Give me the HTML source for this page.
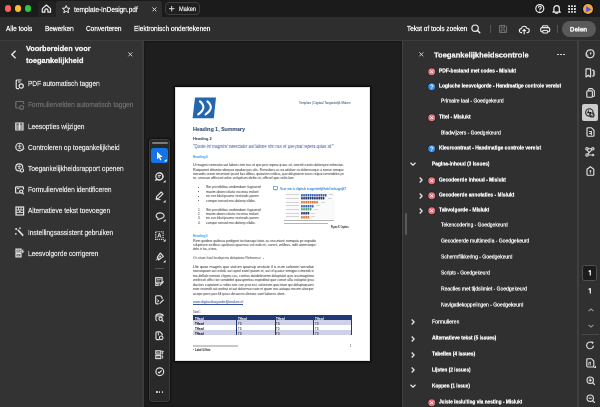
<!DOCTYPE html>
<html><head><meta charset="utf-8">
<style>
*{margin:0;padding:0;box-sizing:border-box}
html,body{width:600px;height:407px;overflow:hidden;background:#1d1d1d;font-family:"Liberation Sans",sans-serif;color:#e8e8e8}
.a{position:absolute}
.t{position:absolute;white-space:nowrap;will-change:transform}
svg{position:absolute;overflow:visible}
</style></head><body>

<div class="a" style="left:0px;top:0px;width:600px;height:17px;background:#1b1b1b;"></div>
<div class="a" style="left:4.7px;top:5.4px;width:6.8px;height:6.8px;background:#fe5f57;border-radius:50%"></div>
<div class="a" style="left:14.7px;top:5.4px;width:6.8px;height:6.8px;background:#febc2e;border-radius:50%"></div>
<div class="a" style="left:24.7px;top:5.4px;width:6.8px;height:6.8px;background:#28c840;border-radius:50%"></div>
<div class="a" style="left:38px;top:1px;width:17.5px;height:16px;background:#222222;border-radius:3px 3px 0 0"></div>
<div class="a" style="left:56px;top:1px;width:106px;height:16px;background:#2e2e2e;border-radius:3px 3px 0 0"></div>
<svg style="left:41px;top:4px;" width="11" height="9" viewBox="0 0 11 9"><path d="M1.3 4.6 L5.4 1 L9.5 4.6 V8.2 H6.9 V6.3 A1.5 1.5 0 0 0 3.9 6.3 V8.2 H1.3 Z" fill="none" stroke="#f0f0f0" stroke-width="1.2" stroke-linejoin="round"/></svg>
<svg style="left:62px;top:4.6px;" width="9" height="9" viewBox="0 0 9 9"><path d="M4.2 0.6 L5.3 3.1 L8 3.3 L5.9 5.1 L6.6 7.7 L4.2 6.3 L1.8 7.7 L2.5 5.1 L0.4 3.3 L3.1 3.1 Z" fill="none" stroke="#eee" stroke-width="1" stroke-linejoin="round"/></svg>
<div class="t" style="left:74px;top:5.67px;font-size:14.00px;line-height:14.00px;color:#e8e8e8;-webkit-text-stroke:0.60px #e8e8e8;transform:scale(0.4650,0.5000);transform-origin:0 0;">template-InDesign.pdf</div>
<svg style="left:151.5px;top:6.8px;" width="5" height="5" viewBox="0 0 5 5"><path d="M0.5 0.5 L4.3 4.3 M4.3 0.5 L0.5 4.3" stroke="#ddd" stroke-width="1"/></svg>
<div class="a" style="left:164.7px;top:2.3px;width:35px;height:12.7px;background:#1f1f1f;border:1px solid #3f3f3f;border-radius:4px"></div>
<svg style="left:168.5px;top:6.3px;" width="6" height="6" viewBox="0 0 6 6"><path d="M2.7 0 V5.4 M0 2.7 H5.4" stroke="#ddd" stroke-width="1"/></svg>
<div class="t" style="left:178.8px;top:6.22px;font-size:12.00px;line-height:12.00px;color:#dedede;-webkit-text-stroke:0.60px #dedede;transform:scale(0.4700,0.5000);transform-origin:0 0;">Maken</div>
<svg style="left:534.5px;top:3.8px;" width="10" height="10" viewBox="0 0 10 10"><circle cx="4.8" cy="4.6" r="4" fill="none" stroke="#f0f0f0" stroke-width="1.15"/><path d="M3.4 3.7 A1.4 1.4 0 1 1 4.8 5 V5.7" fill="none" stroke="#f0f0f0" stroke-width="1.1"/><circle cx="4.8" cy="7.1" r="0.6" fill="#f0f0f0"/></svg>
<svg style="left:551.5px;top:3.5px;" width="10" height="10" viewBox="0 0 10 10"><path d="M1.9 7.3 V4.4 A2.7 2.7 0 0 1 7.3 4.4 V7.3 L8.3 8.1 H0.9 Z" fill="none" stroke="#f0f0f0" stroke-width="1.2" stroke-linejoin="round"/><path d="M3.5 9.3 H5.7" stroke="#f0f0f0" stroke-width="1.1" stroke-linecap="round"/></svg>
<svg style="left:568.1px;top:4.5px;" width="9" height="9" viewBox="0 0 9 9"><rect x="0.2" y="0.2" width="1.8" height="1.8" rx=".5" fill="#f0f0f0"/><rect x="0.2" y="3.1" width="1.8" height="1.8" rx=".5" fill="#f0f0f0"/><rect x="0.2" y="6.0" width="1.8" height="1.8" rx=".5" fill="#f0f0f0"/><rect x="3.1" y="0.2" width="1.8" height="1.8" rx=".5" fill="#f0f0f0"/><rect x="3.1" y="3.1" width="1.8" height="1.8" rx=".5" fill="#f0f0f0"/><rect x="3.1" y="6.0" width="1.8" height="1.8" rx=".5" fill="#f0f0f0"/><rect x="6.0" y="0.2" width="1.8" height="1.8" rx=".5" fill="#f0f0f0"/><rect x="6.0" y="3.1" width="1.8" height="1.8" rx=".5" fill="#f0f0f0"/><rect x="6.0" y="6.0" width="1.8" height="1.8" rx=".5" fill="#f0f0f0"/></svg>
<div class="a" style="left:582.9px;top:3.9px;width:10px;height:10px;background:#f2a93c;border-radius:50%;box-shadow:0 0 0 1px #0c0c0c"></div>
<svg style="left:585.6px;top:5.6px;" width="6" height="7" viewBox="0 0 6 7"><path d="M0.4 0.2 L5.3 3.4 L0.4 6.3 Z" fill="#4a5ae8"/><path d="M0.4 0.2 L2.6 3.3 L0.4 6.3 Z" fill="#6c48e0"/></svg>
<div class="a" style="left:0px;top:17px;width:600px;height:22.8px;background:#2e2e2e;"></div>
<div class="a" style="left:0px;top:39.8px;width:600px;height:1.4px;background:#3c3c3c;"></div>
<div class="t" style="left:5.9px;top:25.27px;font-size:14.00px;line-height:14.00px;color:#f2f2f2;-webkit-text-stroke:0.60px #f2f2f2;transform:scale(0.4600,0.5000);transform-origin:0 0;">Alle tools</div>
<div class="t" style="left:45px;top:25.27px;font-size:14.00px;line-height:14.00px;color:#f2f2f2;-webkit-text-stroke:0.60px #f2f2f2;transform:scale(0.4600,0.5000);transform-origin:0 0;">Bewerken</div>
<div class="t" style="left:86px;top:25.27px;font-size:14.00px;line-height:14.00px;color:#f2f2f2;-webkit-text-stroke:0.60px #f2f2f2;transform:scale(0.4600,0.5000);transform-origin:0 0;">Converteren</div>
<div class="t" style="left:133.7px;top:25.27px;font-size:14.00px;line-height:14.00px;color:#f2f2f2;-webkit-text-stroke:0.60px #f2f2f2;transform:scale(0.4600,0.5000);transform-origin:0 0;">Elektronisch ondertekenen</div>
<div class="t" style="left:407px;top:25.27px;font-size:14.00px;line-height:14.00px;color:#f2f2f2;-webkit-text-stroke:0.60px #f2f2f2;transform:scale(0.4600,0.5000);transform-origin:0 0;">Tekst of tools zoeken</div>
<svg style="left:470px;top:23px;" width="12" height="12" viewBox="0 0 12 12"><circle cx="5.1" cy="5.2" r="3.2" fill="none" stroke="#eee" stroke-width="1.2"/><path d="M7.4 7.5 L9.8 9.8" stroke="#eee" stroke-width="1.3" stroke-linecap="round"/></svg>
<div class="a" style="left:490.1px;top:25px;width:1px;height:7.6px;background:#555;"></div>
<svg style="left:499px;top:25px;" width="9" height="8" viewBox="0 0 9 8"><path d="M0.6 0.6 H6.4 L7.6 1.8 V7.4 H0.6 Z" fill="none" stroke="#777" stroke-width="1"/><path d="M2.2 0.6 V2.8 H5.6 V0.6 M2.2 7.4 V4.8 H5.8 V7.4" fill="none" stroke="#777" stroke-width="0.9"/></svg>
<svg style="left:519px;top:24.5px;" width="11" height="10" viewBox="0 0 11 10"><path d="M3 7.6 H2.4 A2 2 0 0 1 2.3 3.6 A2.9 2.9 0 0 1 7.9 3.2 A2.2 2.2 0 0 1 8.2 7.6 H7.6" fill="none" stroke="#eee" stroke-width="1.1" stroke-linejoin="round"/><path d="M5.2 9.3 V4.6 M3.5 6.2 L5.2 4.5 L6.9 6.2" fill="none" stroke="#eee" stroke-width="1.1"/></svg>
<svg style="left:540px;top:24.8px;" width="11" height="9" viewBox="0 0 11 9"><path d="M2.6 2.6 V0.8 H7.8 V2.6" fill="none" stroke="#eee" stroke-width="1"/><rect x="0.7" y="2.6" width="9" height="4.2" rx="1.3" fill="none" stroke="#eee" stroke-width="1.1"/><path d="M2.8 5.4 H7.6 V8 H2.8 Z" fill="#2e2e2e" stroke="#eee" stroke-width="1"/></svg>
<div class="a" style="left:557.3px;top:25px;width:1px;height:7.6px;background:#555;"></div>
<div class="a" style="left:562px;top:20.8px;width:34.3px;height:16.7px;background:#5a5a5a;border-radius:9px"></div>
<div class="t" style="left:569.5px;top:25.81px;font-size:13.20px;line-height:13.20px;color:#f6f6f6;-webkit-text-stroke:0.60px #f6f6f6;font-weight:bold;transform:scale(0.4750,0.5000);transform-origin:0 0;">Delen</div>
<div class="a" style="left:0px;top:41.2px;width:142.4px;height:366px;background:#333333;"></div>
<div class="a" style="left:142.4px;top:41.2px;width:1.7px;height:366px;background:#3b3b3b;"></div>
<svg style="left:10px;top:49.5px;" width="7" height="9" viewBox="0 0 7 9"><path d="M5.6 0.8 L1.8 4.5 L5.6 8.2" fill="none" stroke="#ececec" stroke-width="1.35"/></svg>
<div class="t" style="left:25.6px;top:45.14px;font-size:14.80px;line-height:14.80px;color:#f0f0f0;-webkit-text-stroke:0.60px #f0f0f0;font-weight:bold;transform:scale(0.4950,0.5000);transform-origin:0 0;">Voorbereiden voor</div>
<div class="t" style="left:25.6px;top:57.14px;font-size:14.80px;line-height:14.80px;color:#f0f0f0;-webkit-text-stroke:0.60px #f0f0f0;font-weight:bold;transform:scale(0.4950,0.5000);transform-origin:0 0;">toegankelijkheid</div>
<svg style="left:127.7px;top:51.8px;" width="5" height="5" viewBox="0 0 5 5"><path d="M0.4 0.4 L4.3 4.3 M4.3 0.4 L0.4 4.3" stroke="#ddd" stroke-width="0.9"/></svg>
<div class="t" style="left:28.1px;top:80.11px;font-size:14.40px;line-height:14.40px;color:#dcdcdc;-webkit-text-stroke:0.60px #dcdcdc;transform:scale(0.4525,0.5000);transform-origin:0 0;">PDF automatisch taggen</div>
<svg style="left:15.0px;top:78.60000000000001px;" width="10" height="10" viewBox="0 0 10 10"><path d="M6.5 1 H2.2 A1 1 0 0 0 1.2 2 V8.6 A1 1 0 0 0 2.2 9.6 H4" fill="none" stroke="#e4e4e4" stroke-width="1.2"/><path d="M3 3 H5.6" stroke="#e4e4e4" stroke-width="1"/><circle cx="6.2" cy="7" r="2.1" fill="none" stroke="#e4e4e4" stroke-width="1.2"/></svg>
<div class="t" style="left:28.1px;top:101.31px;font-size:14.40px;line-height:14.40px;color:#6a6a6a;-webkit-text-stroke:0.60px #6a6a6a;transform:scale(0.4525,0.5000);transform-origin:0 0;">Formuliervelden automatisch taggen</div>
<svg style="left:15.0px;top:99.80000000000001px;" width="10" height="10" viewBox="0 0 10 10"><path d="M4 8 H1.8 A1 1 0 0 1 0.8 7 V2.5 A1 1 0 0 1 1.8 1.5 H7.6 A1 1 0 0 1 8.6 2.5 V4" fill="none" stroke="#6e6e6e" stroke-width="1.2"/><circle cx="6.6" cy="7.4" r="1.9" fill="none" stroke="#6e6e6e" stroke-width="1.2"/></svg>
<div class="t" style="left:28.1px;top:122.51px;font-size:14.40px;line-height:14.40px;color:#dcdcdc;-webkit-text-stroke:0.60px #dcdcdc;transform:scale(0.4525,0.5000);transform-origin:0 0;">Leesopties wijzigen</div>
<svg style="left:15.0px;top:121.0px;" width="10" height="10" viewBox="0 0 10 10"><path d="M0.8 2 H4.4 V9 H0.8 Z M4.4 2 H8 V9 H4.4 Z" fill="none" stroke="#e4e4e4" stroke-width="1.2"/><path d="M2 3.5 V8 M3.2 3.5 V8 M5.6 3.5 V8 M6.8 3.5 V8" stroke="#e4e4e4" stroke-width=".8"/></svg>
<div class="t" style="left:28.1px;top:143.71px;font-size:14.40px;line-height:14.40px;color:#dcdcdc;-webkit-text-stroke:0.60px #dcdcdc;transform:scale(0.4525,0.5000);transform-origin:0 0;">Controleren op toegankelijkheid</div>
<svg style="left:15.0px;top:142.20000000000002px;" width="10" height="10" viewBox="0 0 10 10"><circle cx="4.6" cy="5" r="3.8" fill="none" stroke="#e4e4e4" stroke-width="1.15"/><circle cx="4.6" cy="2.9" r=".65" fill="#e4e4e4"/><path d="M2.6 4.1 H6.6 M4.6 4.1 V5.6 L3.4 7.3 M4.6 5.6 L5.8 7.3" fill="none" stroke="#e4e4e4" stroke-width=".85"/><path d="M6.2 7.6 L7.2 8.4 L9.2 6.2" fill="none" stroke="#e4e4e4" stroke-width="1"/></svg>
<div class="t" style="left:28.1px;top:164.91px;font-size:14.40px;line-height:14.40px;color:#dcdcdc;-webkit-text-stroke:0.60px #dcdcdc;transform:scale(0.4525,0.5000);transform-origin:0 0;">Toegankelijkheidsrapport openen</div>
<svg style="left:15.0px;top:163.4px;" width="10" height="10" viewBox="0 0 10 10"><circle cx="4.2" cy="4.4" r="3.5" fill="none" stroke="#e4e4e4" stroke-width="1.15"/><circle cx="4.2" cy="2.5" r=".6" fill="#e4e4e4"/><path d="M2.4 3.6 H6 M4.2 3.6 V4.9 L3.2 6.4 M4.2 4.9 L5.2 6.4" fill="none" stroke="#e4e4e4" stroke-width=".8"/><circle cx="7" cy="7.4" r="2.3" fill="#333333"/><circle cx="7" cy="7.4" r="1.6" fill="none" stroke="#e4e4e4" stroke-width="1.1"/></svg>
<div class="t" style="left:28.1px;top:186.11px;font-size:14.40px;line-height:14.40px;color:#dcdcdc;-webkit-text-stroke:0.60px #dcdcdc;transform:scale(0.4525,0.5000);transform-origin:0 0;">Formuliervelden identificeren</div>
<svg style="left:15.0px;top:184.6px;" width="10" height="10" viewBox="0 0 10 10"><path d="M4.5 8 H1.4 A.8 .8 0 0 1 .6 7.2 V2.6 A.8 .8 0 0 1 1.4 1.8 H7.6 A.8 .8 0 0 1 8.4 2.6 V4.5" fill="none" stroke="#e4e4e4" stroke-width="1.2"/><path d="M2 3.6 H4.4" stroke="#e4e4e4" stroke-width="1"/><circle cx="6.2" cy="6.6" r="1.6" fill="none" stroke="#e4e4e4" stroke-width="1.2"/><path d="M7.3 7.7 L8.9 9.3" stroke="#e4e4e4" stroke-width="1.2"/></svg>
<div class="t" style="left:28.1px;top:207.31px;font-size:14.40px;line-height:14.40px;color:#dcdcdc;-webkit-text-stroke:0.60px #dcdcdc;transform:scale(0.4525,0.5000);transform-origin:0 0;">Alternatieve tekst toevoegen</div>
<svg style="left:15.0px;top:205.79999999999998px;" width="10" height="10" viewBox="0 0 10 10"><rect x="1" y="1" width="7.6" height="8" fill="none" stroke="#e4e4e4" stroke-width="1.2"/><path d="M1 4 H8.6 M1 6.4 H8.6 M3.5 1 V4 M6 1 V4" stroke="#e4e4e4" stroke-width=".9"/><circle cx="4.8" cy="5.4" r=".8" fill="#e4e4e4"/></svg>
<div class="t" style="left:28.1px;top:228.51px;font-size:14.40px;line-height:14.40px;color:#dcdcdc;-webkit-text-stroke:0.60px #dcdcdc;transform:scale(0.4525,0.5000);transform-origin:0 0;">Instellingsassistent gebruiken</div>
<svg style="left:15.0px;top:227.00000000000003px;" width="10" height="10" viewBox="0 0 10 10"><path d="M2.8 2.8 L8.2 8.6" stroke="#e4e4e4" stroke-width="1.6"/><path d="M1.2 1 V3 M0.2 2 H2.2 M5 0.5 V1.8 M4.3 1.2 H5.7 M0.8 6.2 V7.6 M0.1 6.9 H1.5" stroke="#e4e4e4" stroke-width="1"/></svg>
<div class="t" style="left:28.1px;top:249.71px;font-size:14.40px;line-height:14.40px;color:#dcdcdc;-webkit-text-stroke:0.60px #dcdcdc;transform:scale(0.4525,0.5000);transform-origin:0 0;">Leesvolgorde corrigeren</div>
<svg style="left:15.0px;top:248.20000000000002px;" width="10" height="10" viewBox="0 0 10 10"><path d="M1 1.2 H6 V4.2 H1 Z M1 5.6 H6 V8.8 H1 Z" fill="none" stroke="#e4e4e4" stroke-width="1.2"/><path d="M2.2 2.7 H4.6 M2.2 7.2 H4.6" stroke="#e4e4e4" stroke-width=".9"/><path d="M7.8 1.6 V4.4 M6.8 3.4 L7.8 4.6 L8.8 3.4" fill="none" stroke="#e4e4e4" stroke-width="1"/></svg>
<div class="a" style="left:144.1px;top:41.2px;width:257.5px;height:366px;background:#1e1e1e;box-shadow:inset 0 0 3px rgba(0,0,0,.45)"></div>
<div class="a" style="left:174.5px;top:87px;width:195px;height:274px;background:#ffffff;box-shadow:0 0 2px 1px rgba(0,0,0,.9),inset 0 0 0 0.8px #dcdcdc"></div>
<svg style="left:192px;top:96.5px;" width="25" height="22" viewBox="0 0 25 22"><path d="M3 0.5 H24 L21.8 21.3 H0.6 Z" fill="#2366ad"/><path d="M8 4.4 Q15.6 10.9 6.2 17.4 M15.4 4.4 Q23 10.9 13.6 17.4" fill="none" stroke="#fff" stroke-width="2.1" stroke-linecap="round"/></svg>
<div class="t" style="left:299.3px;top:102.89px;font-size:2.70px;line-height:2.70px;color:#1f3864;-webkit-text-stroke:0.00px #1f3864;transform:scale(1.1078,1.0000);transform-origin:0 0;">Template | Digitaal Toegankelijk Maken</div>
<div class="t" style="left:192.6px;top:127.13px;font-size:5.90px;line-height:5.90px;color:#1f3864;-webkit-text-stroke:0.00px #1f3864;font-weight:bold;transform:scale(0.8910,1.0000);transform-origin:0 0;">Heading 1, Summary</div>
<div class="t" style="left:192.6px;top:137.20px;font-size:3.90px;line-height:3.90px;color:#1f3864;-webkit-text-stroke:0.00px #1f3864;font-weight:bold;transform:scale(0.9872,1.0000);transform-origin:0 0;">Heading 2</div>
<div class="t" style="left:192.6px;top:145.42px;font-size:4.90px;line-height:4.90px;color:#3556a0;-webkit-text-stroke:0.00px #3556a0;font-style:italic;transform:scale(0.8319,1.0000);transform-origin:0 0;">&quot;Quote int magnimi nwerciatur aut labore nim nus et que prat repera quias sit&quot;</div>
<div class="t" style="left:192.7px;top:155.64px;font-size:3.20px;line-height:3.20px;color:#2e9be0;-webkit-text-stroke:0.00px #2e9be0;font-weight:bold;transform:scale(0.9613,1.0000);transform-origin:0 0;">Heading 4</div>
<div class="t" style="left:192.7px;top:164.10px;font-size:3.70px;line-height:3.70px;color:#2a2a2a;-webkit-text-stroke:0.00px #2a2a2a;transform:scale(0.8982,1.0000);transform-origin:0 0;">Ut magnis nemzatur aut laboris nim nus et que prat repera quias sit, nwenih ezatis dolorepro entinctae.</div>
<div class="t" style="left:192.7px;top:168.53px;font-size:3.70px;line-height:3.70px;color:#2a2a2a;-webkit-text-stroke:0.00px #2a2a2a;transform:scale(0.8905,1.0000);transform-origin:0 0;">Ratquamet ditiuntur aborpor epudae pos alis. Remalians as ea adolum as doloreseque a nonse remque</div>
<div class="t" style="left:192.7px;top:172.96px;font-size:3.70px;line-height:3.70px;color:#2a2a2a;-webkit-text-stroke:0.00px #2a2a2a;transform:scale(0.8534,1.0000);transform-origin:0 0;">nonsedis serum rerumtore ipsunt faccullibus, quatatem estibus, quo doluptatem exces nulpari omendeles pe</div>
<div class="t" style="left:192.7px;top:177.39px;font-size:3.70px;line-height:3.70px;color:#2a2a2a;-webkit-text-stroke:0.00px #2a2a2a;transform:scale(0.9484,1.0000);transform-origin:0 0;">re, sinusae officiunt volor voluptium debis et, officiel que velis lam</div>
<div class="a" style="left:198.4px;top:186.7px;width:1.1px;height:1.1px;background:#333;border-radius:50%"></div>
<div class="t" style="left:205.7px;top:186.20px;font-size:3.70px;line-height:3.70px;color:#2a2a2a;-webkit-text-stroke:0.00px #2a2a2a;transform:scale(0.9688,1.0000);transform-origin:0 0;">Sin perciblitas endendam fugiaerid</div>
<div class="a" style="left:198.4px;top:191.17px;width:1.1px;height:1.1px;background:#333;border-radius:50%"></div>
<div class="t" style="left:205.7px;top:190.67px;font-size:3.70px;line-height:3.70px;color:#2a2a2a;-webkit-text-stroke:0.00px #2a2a2a;transform:scale(0.8734,1.0000);transform-origin:0 0;">maxim aborro iducto escerias molorit</div>
<div class="a" style="left:198.4px;top:195.64px;width:1.1px;height:1.1px;background:#333;border-radius:50%"></div>
<div class="t" style="left:205.7px;top:195.14px;font-size:3.70px;line-height:3.70px;color:#2a2a2a;-webkit-text-stroke:0.00px #2a2a2a;transform:scale(0.8673,1.0000);transform-origin:0 0;">nis eve blati ipsume nestendis porem</div>
<div class="a" style="left:198.4px;top:200.10999999999999px;width:1.1px;height:1.1px;background:#333;border-radius:50%"></div>
<div class="t" style="left:205.7px;top:199.61px;font-size:3.70px;line-height:3.70px;color:#2a2a2a;-webkit-text-stroke:0.00px #2a2a2a;transform:scale(0.8348,1.0000);transform-origin:0 0;">cumque nonsed mos dolorep ellabo.</div>
<div class="t" style="left:198.3px;top:208.60px;font-size:3.70px;line-height:3.70px;color:#2a2a2a;-webkit-text-stroke:0.00px #2a2a2a;transform:scale(0.7778,1.0000);transform-origin:0 0;">1.</div>
<div class="t" style="left:205.7px;top:208.60px;font-size:3.70px;line-height:3.70px;color:#2a2a2a;-webkit-text-stroke:0.00px #2a2a2a;transform:scale(0.9688,1.0000);transform-origin:0 0;">Sin perciblitas endendam fugiaerid</div>
<div class="t" style="left:198.3px;top:213.03px;font-size:3.70px;line-height:3.70px;color:#2a2a2a;-webkit-text-stroke:0.00px #2a2a2a;transform:scale(0.7778,1.0000);transform-origin:0 0;">2.</div>
<div class="t" style="left:205.7px;top:213.03px;font-size:3.70px;line-height:3.70px;color:#2a2a2a;-webkit-text-stroke:0.00px #2a2a2a;transform:scale(0.8734,1.0000);transform-origin:0 0;">maxim aborro iducto escerias molorit</div>
<div class="t" style="left:198.3px;top:217.46px;font-size:3.70px;line-height:3.70px;color:#2a2a2a;-webkit-text-stroke:0.00px #2a2a2a;transform:scale(0.7778,1.0000);transform-origin:0 0;">3.</div>
<div class="t" style="left:205.7px;top:217.46px;font-size:3.70px;line-height:3.70px;color:#2a2a2a;-webkit-text-stroke:0.00px #2a2a2a;transform:scale(0.8673,1.0000);transform-origin:0 0;">nis eve blati ipsume nestendis porem</div>
<div class="t" style="left:198.3px;top:221.89px;font-size:3.70px;line-height:3.70px;color:#2a2a2a;-webkit-text-stroke:0.00px #2a2a2a;transform:scale(0.7778,1.0000);transform-origin:0 0;">4.</div>
<div class="t" style="left:205.7px;top:221.89px;font-size:3.70px;line-height:3.70px;color:#2a2a2a;-webkit-text-stroke:0.00px #2a2a2a;transform:scale(0.8348,1.0000);transform-origin:0 0;">cumque nonsed mos dolorep ellabo.</div>
<svg style="left:272.6px;top:186px;" width="5" height="4.4" viewBox="0 0 5 4.4"><rect x=".4" y=".4" width="4.2" height="3" fill="none" stroke="#5b8fd6" stroke-width=".7"/><path d="M1.2 4 H3.8" stroke="#5b8fd6" stroke-width=".6"/></svg>
<div class="t" style="left:279.6px;top:187.30px;font-size:3.90px;line-height:3.90px;color:#3389dc;-webkit-text-stroke:0.00px #3389dc;font-weight:bold;transform:scale(0.7475,1.0000);transform-origin:0 0;">Voor wie is digitale toegankelijkheid belangrijk?</div>
<div class="a" style="left:284.7px;top:192px;width:50.1px;height:26.6px;background:#fafafa;"></div>
<div class="a" style="left:286px;top:194.29999999999998px;width:12.8px;height:0.8px;background:#d2d2d2;"></div>
<svg style="left:301px;top:193.5px;" width="26" height="2.4" viewBox="0 0 26 2.4"><rect x="0.00" y="0" width="1.75" height="2.4" rx=".4" fill="#3d63a8"/><rect x="2.17" y="0" width="1.75" height="2.4" rx=".4" fill="#3d63a8"/><rect x="4.34" y="0" width="1.75" height="2.4" rx=".4" fill="#3d63a8"/><rect x="6.51" y="0" width="1.75" height="2.4" rx=".4" fill="#3d63a8"/><rect x="8.68" y="0" width="1.75" height="2.4" rx=".4" fill="#3d63a8"/><rect x="10.85" y="0" width="1.75" height="2.4" rx=".4" fill="#3d63a8"/><rect x="13.02" y="0" width="1.75" height="2.4" rx=".4" fill="#3d63a8"/><rect x="15.19" y="0" width="1.75" height="2.4" rx=".4" fill="#3d63a8"/><rect x="17.36" y="0" width="1.75" height="2.4" rx=".4" fill="#3d63a8"/><rect x="19.53" y="0" width="1.75" height="2.4" rx=".4" fill="#3d63a8"/><rect x="21.70" y="0" width="1.75" height="2.4" rx=".4" fill="#3d63a8"/><rect x="23.87" y="0" width="1.75" height="2.4" rx=".4" fill="#3d63a8"/></svg>
<div class="a" style="left:328.8px;top:194.29999999999998px;width:4.2px;height:0.8px;background:#d4d4d4;"></div>
<div class="a" style="left:286px;top:197.98px;width:12.8px;height:0.8px;background:#d2d2d2;"></div>
<svg style="left:301px;top:197.18px;" width="24.899999999999977" height="2.4" viewBox="0 0 24.899999999999977 2.4"><rect x="0.00" y="0" width="1.75" height="2.4" rx=".4" fill="#2c3a70"/><rect x="2.17" y="0" width="1.75" height="2.4" rx=".4" fill="#2c3a70"/><rect x="4.34" y="0" width="1.75" height="2.4" rx=".4" fill="#2c3a70"/><rect x="6.51" y="0" width="1.75" height="2.4" rx=".4" fill="#2c3a70"/><rect x="8.68" y="0" width="1.75" height="2.4" rx=".4" fill="#2c3a70"/><rect x="10.85" y="0" width="1.75" height="2.4" rx=".4" fill="#2c3a70"/><rect x="13.02" y="0" width="1.75" height="2.4" rx=".4" fill="#2c3a70"/><rect x="15.19" y="0" width="1.75" height="2.4" rx=".4" fill="#2c3a70"/><rect x="17.36" y="0" width="1.75" height="2.4" rx=".4" fill="#2c3a70"/><rect x="19.53" y="0" width="1.75" height="2.4" rx=".4" fill="#2c3a70"/><rect x="21.70" y="0" width="1.75" height="2.4" rx=".4" fill="#2c3a70"/></svg>
<div class="a" style="left:327.7px;top:197.98px;width:4.2px;height:0.8px;background:#d4d4d4;"></div>
<div class="a" style="left:286px;top:201.66px;width:12.8px;height:0.8px;background:#d2d2d2;"></div>
<svg style="left:301px;top:200.86px;" width="17.899999999999977" height="2.4" viewBox="0 0 17.899999999999977 2.4"><rect x="0.00" y="0" width="1.75" height="2.4" rx=".4" fill="#e07a3a"/><rect x="2.17" y="0" width="1.75" height="2.4" rx=".4" fill="#e07a3a"/><rect x="4.34" y="0" width="1.75" height="2.4" rx=".4" fill="#e07a3a"/><rect x="6.51" y="0" width="1.75" height="2.4" rx=".4" fill="#e07a3a"/><rect x="8.68" y="0" width="1.75" height="2.4" rx=".4" fill="#e07a3a"/><rect x="10.85" y="0" width="1.75" height="2.4" rx=".4" fill="#e07a3a"/><rect x="13.02" y="0" width="1.75" height="2.4" rx=".4" fill="#e07a3a"/><rect x="15.19" y="0" width="1.75" height="2.4" rx=".4" fill="#e07a3a"/></svg>
<div class="a" style="left:320.7px;top:201.66px;width:4.2px;height:0.8px;background:#d4d4d4;"></div>
<div class="a" style="left:286px;top:205.33999999999997px;width:12.8px;height:0.8px;background:#d2d2d2;"></div>
<svg style="left:301px;top:204.54px;" width="13" height="2.4" viewBox="0 0 13 2.4"><rect x="0.00" y="0" width="1.75" height="2.4" rx=".4" fill="#3d6ab8"/><rect x="2.17" y="0" width="1.75" height="2.4" rx=".4" fill="#3d6ab8"/><rect x="4.34" y="0" width="1.75" height="2.4" rx=".4" fill="#3d6ab8"/><rect x="6.51" y="0" width="1.75" height="2.4" rx=".4" fill="#3d6ab8"/><rect x="8.68" y="0" width="1.75" height="2.4" rx=".4" fill="#3d6ab8"/><rect x="10.85" y="0" width="1.75" height="2.4" rx=".4" fill="#3d6ab8"/></svg>
<div class="a" style="left:315.8px;top:205.33999999999997px;width:4.2px;height:0.8px;background:#d4d4d4;"></div>
<div class="a" style="left:286px;top:209.01999999999998px;width:12.8px;height:0.8px;background:#d2d2d2;"></div>
<svg style="left:301px;top:208.22px;" width="11.300000000000011" height="2.4" viewBox="0 0 11.300000000000011 2.4"><rect x="0.00" y="0" width="1.75" height="2.4" rx=".4" fill="#5aa882"/><rect x="2.17" y="0" width="1.75" height="2.4" rx=".4" fill="#5aa882"/><rect x="4.34" y="0" width="1.75" height="2.4" rx=".4" fill="#5aa882"/><rect x="6.51" y="0" width="1.75" height="2.4" rx=".4" fill="#5aa882"/><rect x="8.68" y="0" width="1.75" height="2.4" rx=".4" fill="#5aa882"/></svg>
<div class="a" style="left:314.1px;top:209.01999999999998px;width:4.2px;height:0.8px;background:#d4d4d4;"></div>
<div class="a" style="left:286px;top:212.7px;width:12.8px;height:0.8px;background:#d2d2d2;"></div>
<svg style="left:301px;top:211.9px;" width="8" height="2.4" viewBox="0 0 8 2.4"><rect x="0.00" y="0" width="1.75" height="2.4" rx=".4" fill="#2c3a70"/><rect x="2.17" y="0" width="1.75" height="2.4" rx=".4" fill="#2c3a70"/><rect x="4.34" y="0" width="1.75" height="2.4" rx=".4" fill="#2c3a70"/><rect x="6.51" y="0" width="1.75" height="2.4" rx=".4" fill="#2c3a70"/></svg>
<div class="a" style="left:310.8px;top:212.7px;width:4.2px;height:0.8px;background:#d4d4d4;"></div>
<div class="a" style="left:286px;top:216.38px;width:12.8px;height:0.8px;background:#d2d2d2;"></div>
<svg style="left:301px;top:215.58px;" width="8" height="2.4" viewBox="0 0 8 2.4"><rect x="0.00" y="0" width="1.75" height="2.4" rx=".4" fill="#e07a3a"/><rect x="2.17" y="0" width="1.75" height="2.4" rx=".4" fill="#e07a3a"/><rect x="4.34" y="0" width="1.75" height="2.4" rx=".4" fill="#e07a3a"/><rect x="6.51" y="0" width="1.75" height="2.4" rx=".4" fill="#e07a3a"/></svg>
<div class="a" style="left:310.8px;top:216.38px;width:4.2px;height:0.8px;background:#d4d4d4;"></div>
<div class="a" style="left:283.8px;top:220.4px;width:50px;height:0.7px;background:#b4b4b4;"></div>
<div class="a" style="left:283.8px;top:222.9px;width:44px;height:0.7px;background:#b4b4b4;"></div>
<div class="t" style="left:331px;top:226.54px;font-size:2.60px;line-height:2.60px;color:#222;-webkit-text-stroke:0.00px #222;font-weight:bold;transform:scale(0.8024,1.0000);transform-origin:0 0;">Figuur X: Caption</div>
<div class="t" style="left:192.7px;top:234.54px;font-size:3.20px;line-height:3.20px;color:#2e9be0;-webkit-text-stroke:0.00px #2e9be0;font-weight:bold;transform:scale(0.9613,1.0000);transform-origin:0 0;">Heading 5</div>
<div class="t" style="left:192.7px;top:239.80px;font-size:3.70px;line-height:3.70px;color:#2a2a2a;-webkit-text-stroke:0.00px #2a2a2a;transform:scale(0.9202,1.0000);transform-origin:0 0;">Rem quidero quibusa pedigent inctiuesqui tutas as essuntant numquia pe expudio</div>
<div class="t" style="left:192.7px;top:244.10px;font-size:3.70px;line-height:3.70px;color:#2a2a2a;-webkit-text-stroke:0.00px #2a2a2a;transform:scale(0.9892,1.0000);transform-origin:0 0;">siluptiore estibus apiducia quamus est odo et, conet, velibus, odit atemsequi</div>
<div class="t" style="left:192.7px;top:248.40px;font-size:3.70px;line-height:3.70px;color:#2a2a2a;-webkit-text-stroke:0.00px #2a2a2a;transform:scale(0.6991,1.0000);transform-origin:0 0;">doles in hus, ut imus.</div>
<div class="t" style="left:192.7px;top:257.20px;font-size:3.70px;line-height:3.70px;color:#3a3a3a;-webkit-text-stroke:0.00px #3a3a3a;transform:scale(0.9009,1.0000);transform-origin:0 0;">Os etum fstal landsperia doluptatur Reference</div>
<div class="t" style="left:262.5px;top:256.88px;font-size:2.30px;line-height:2.30px;color:#333;-webkit-text-stroke:0.00px #333;transform:scale(1.0000,1.0000);transform-origin:0 0;">1</div>
<div class="t" style="left:192.7px;top:266.00px;font-size:3.70px;line-height:3.70px;color:#2a2a2a;-webkit-text-stroke:0.00px #2a2a2a;transform:scale(1.0329,1.0000);transform-origin:0 0;">Ute quae magnis que statum quaesip eroitate il is eum solorem wendae</div>
<div class="t" style="left:192.7px;top:270.43px;font-size:3.70px;line-height:3.70px;color:#2a2a2a;-webkit-text-stroke:0.00px #2a2a2a;transform:scale(0.9258,1.0000);transform-origin:0 0;">nonsequam aut esled, aut aped eatel parum et, aut el quatur remqpo rumendi st</div>
<div class="t" style="left:192.7px;top:274.86px;font-size:3.70px;line-height:3.70px;color:#2a2a2a;-webkit-text-stroke:0.00px #2a2a2a;transform:scale(0.9032,1.0000);transform-origin:0 0;">ma dellalo nonnon clignisi cus, contius dandelesterm doluptatet quis assimagnimo</div>
<div class="t" style="left:192.7px;top:279.29px;font-size:3.70px;line-height:3.70px;color:#2a2a2a;-webkit-text-stroke:0.00px #2a2a2a;transform:scale(0.9785,1.0000);transform-origin:0 0;">welessit offici tor sendebit quasperitas expeditat que conet ulla voluptio ipsa</div>
<div class="t" style="left:192.7px;top:283.72px;font-size:3.70px;line-height:3.70px;color:#2a2a2a;-webkit-text-stroke:0.00px #2a2a2a;transform:scale(0.9220,1.0000);transform-origin:0 0;">ducturs cuptatem a nobis non con prat est, soloreum qua etum qui doluptaquam</div>
<div class="t" style="left:192.7px;top:288.15px;font-size:3.70px;line-height:3.70px;color:#2a2a2a;-webkit-text-stroke:0.00px #2a2a2a;transform:scale(0.8981,1.0000);transform-origin:0 0;">num resimolt aut weleat et aut dolormuo nam et quam eos autaqui necem aborpor</div>
<div class="t" style="left:192.7px;top:292.58px;font-size:3.70px;line-height:3.70px;color:#2a2a2a;-webkit-text-stroke:0.00px #2a2a2a;transform:scale(0.9303,1.0000);transform-origin:0 0;">acepe pore parchil ipsus dicaeces derutur sant labores olunt.</div>
<div class="t" style="left:192.7px;top:301.40px;font-size:3.70px;line-height:3.70px;color:#1f3f8f;-webkit-text-stroke:0.00px #1f3f8f;transform:scale(0.9125,1.0000);transform-origin:0 0;">www.digitaaltoegankelijkmaken.nl</div>
<div class="a" style="left:192.7px;top:304.3px;width:50.3px;height:0.5px;background:#3a55a0;"></div>
<div class="t" style="left:192.7px;top:311.19px;font-size:2.90px;line-height:2.90px;color:#333;-webkit-text-stroke:0.00px #333;transform:scale(0.8127,1.0000);transform-origin:0 0;">Tabel 1</div>
<div class="a" style="left:192.5px;top:315px;width:159.5px;height:20.4px;background:#1f3a74;"></div>
<div class="a" style="left:193.2px;top:320.2px;width:158.1px;height:4.5px;background:#d0d0e8;"></div>
<div class="a" style="left:193.2px;top:325.3px;width:158.1px;height:4.5px;background:#ffffff;"></div>
<div class="a" style="left:193.2px;top:330.4px;width:158.1px;height:4.4px;background:#d0d0e8;"></div>
<div class="a" style="left:236.2px;top:320px;width:0.5px;height:15px;background:#1f3a74;"></div>
<div class="a" style="left:274.6px;top:320px;width:0.5px;height:15px;background:#1f3a74;"></div>
<div class="a" style="left:313px;top:320px;width:0.5px;height:15px;background:#1f3a74;"></div>
<div class="t" style="left:194.5px;top:317.59px;font-size:2.90px;line-height:2.90px;color:#fff;-webkit-text-stroke:0.00px #fff;font-weight:bold;transform:scale(0.9590,1.0000);transform-origin:0 0;">THead</div>
<div class="t" style="left:194.5px;top:322.69px;font-size:2.90px;line-height:2.90px;color:#111;-webkit-text-stroke:0.00px #111;font-weight:bold;transform:scale(0.9590,1.0000);transform-origin:0 0;">THead</div>
<div class="t" style="left:194.5px;top:327.79px;font-size:2.90px;line-height:2.90px;color:#111;-webkit-text-stroke:0.00px #111;font-weight:bold;transform:scale(0.9590,1.0000);transform-origin:0 0;">THead</div>
<div class="t" style="left:194.5px;top:332.89px;font-size:2.90px;line-height:2.90px;color:#111;-webkit-text-stroke:0.00px #111;font-weight:bold;transform:scale(0.9590,1.0000);transform-origin:0 0;">THead</div>
<div class="t" style="left:237.8px;top:317.59px;font-size:2.90px;line-height:2.90px;color:#fff;-webkit-text-stroke:0.00px #fff;font-weight:bold;transform:scale(0.9590,1.0000);transform-origin:0 0;">THead</div>
<div class="t" style="left:237.8px;top:322.69px;font-size:2.90px;line-height:2.90px;color:#111;-webkit-text-stroke:0.00px #111;transform:scale(0.9312,1.0000);transform-origin:0 0;">TD</div>
<div class="t" style="left:237.8px;top:327.79px;font-size:2.90px;line-height:2.90px;color:#111;-webkit-text-stroke:0.00px #111;transform:scale(0.9312,1.0000);transform-origin:0 0;">TD</div>
<div class="t" style="left:237.8px;top:332.89px;font-size:2.90px;line-height:2.90px;color:#111;-webkit-text-stroke:0.00px #111;transform:scale(0.9312,1.0000);transform-origin:0 0;">TD</div>
<div class="t" style="left:276.3px;top:317.59px;font-size:2.90px;line-height:2.90px;color:#fff;-webkit-text-stroke:0.00px #fff;font-weight:bold;transform:scale(0.9590,1.0000);transform-origin:0 0;">THead</div>
<div class="t" style="left:276.3px;top:322.69px;font-size:2.90px;line-height:2.90px;color:#111;-webkit-text-stroke:0.00px #111;transform:scale(0.9312,1.0000);transform-origin:0 0;">TD</div>
<div class="t" style="left:276.3px;top:327.79px;font-size:2.90px;line-height:2.90px;color:#111;-webkit-text-stroke:0.00px #111;transform:scale(0.9312,1.0000);transform-origin:0 0;">TD</div>
<div class="t" style="left:276.3px;top:332.89px;font-size:2.90px;line-height:2.90px;color:#111;-webkit-text-stroke:0.00px #111;transform:scale(0.9312,1.0000);transform-origin:0 0;">TD</div>
<div class="t" style="left:314.8px;top:317.59px;font-size:2.90px;line-height:2.90px;color:#fff;-webkit-text-stroke:0.00px #fff;font-weight:bold;transform:scale(0.9590,1.0000);transform-origin:0 0;">THead</div>
<div class="t" style="left:314.8px;top:322.69px;font-size:2.90px;line-height:2.90px;color:#111;-webkit-text-stroke:0.00px #111;transform:scale(0.9312,1.0000);transform-origin:0 0;">TD</div>
<div class="t" style="left:314.8px;top:327.79px;font-size:2.90px;line-height:2.90px;color:#111;-webkit-text-stroke:0.00px #111;transform:scale(0.9312,1.0000);transform-origin:0 0;">TD</div>
<div class="t" style="left:314.8px;top:332.89px;font-size:2.90px;line-height:2.90px;color:#111;-webkit-text-stroke:0.00px #111;transform:scale(0.9312,1.0000);transform-origin:0 0;">TD</div>
<div class="a" style="left:192.5px;top:344.8px;width:45.5px;height:2px;background:#c8c8c8;"></div>
<div class="t" style="left:192.8px;top:348.33px;font-size:2.20px;line-height:2.20px;color:#222;-webkit-text-stroke:0.00px #222;font-weight:bold;transform:scale(1.0000,1.0000);transform-origin:0 0;">1</div>
<div class="t" style="left:195px;top:349.69px;font-size:2.70px;line-height:2.70px;color:#222;-webkit-text-stroke:0.00px #222;font-weight:bold;transform:scale(0.9393,1.0000);transform-origin:0 0;">Label &amp; Note</div>
<div class="t" style="left:349.8px;top:345.84px;font-size:2.60px;line-height:2.60px;color:#222;-webkit-text-stroke:0.00px #222;transform:scale(1.0000,1.0000);transform-origin:0 0;">1</div>
<div class="a" style="left:148.9px;top:139px;width:21.3px;height:263px;background:#292929;border:1px solid #3d3d3d;border-radius:3px;box-shadow:0 0 2px 1px rgba(0,0,0,.5)"></div>
<div class="a" style="left:151.8px;top:142px;width:16px;height:1.5px;background:#7a7a7a;border-radius:1px"></div>
<div class="a" style="left:151.3px;top:147.7px;width:16.3px;height:15.8px;background:#1473e6;border-radius:2.5px"></div>
<svg style="left:155.5px;top:150.5px;" width="8" height="10" viewBox="0 0 8 10"><path d="M1 0.8 V8.4 L2.9 6.6 L4.3 9.4 L5.5 8.8 L4.1 6.1 L6.7 6 Z" fill="#fff"/></svg>
<svg style="left:163.6px;top:159.2px;" width="3" height="3" viewBox="0 0 3 3"><path d="M2.6 0 V2.6 H0 Z" fill="#fff"/></svg>
<svg style="left:154.8px;top:171.5px;" width="9" height="9" viewBox="0 0 9 9"><path d="M4.4 0.8 A3.6 3.6 0 1 1 1.5 6.6 L0.9 8 L2.6 7.4 A3.6 3.6 0 0 0 4.4 8" fill="none" stroke="#e2e2e2" stroke-width="1.15"/><circle cx="4.4" cy="4.4" r="3.6" fill="none" stroke="#e2e2e2" stroke-width="1.15"/><path d="M2.8 3.4 H6 M2.8 5 H5.2" stroke="#e2e2e2" stroke-width=".95"/></svg>
<svg style="left:163.3px;top:179.6px;" width="3" height="3" viewBox="0 0 3 3"><path d="M2.6 0 V2.6 H0 Z" fill="#e2e2e2"/></svg>
<svg style="left:154.8px;top:191.3px;" width="9" height="9" viewBox="0 0 9 9"><path d="M1.2 7.6 L1.8 5.4 L6.2 1 L8 2.8 L3.6 7.2 Z" fill="none" stroke="#e2e2e2" stroke-width="1.15" stroke-linejoin="round"/><path d="M0.6 8.6 H5.5" stroke="#e2e2e2" stroke-width=".9"/></svg>
<svg style="left:163.3px;top:199.5px;" width="3" height="3" viewBox="0 0 3 3"><path d="M2.6 0 V2.6 H0 Z" fill="#e2e2e2"/></svg>
<svg style="left:154.5px;top:211.3px;" width="10" height="9" viewBox="0 0 10 9"><path d="M3.4 7.2 A4 2.8 0 1 1 6.5 7.3 Q4.4 8.2 2.4 8.6" fill="none" stroke="#e2e2e2" stroke-width="1.15"/></svg>
<svg style="left:163.3px;top:219.4px;" width="3" height="3" viewBox="0 0 3 3"><path d="M2.6 0 V2.6 H0 Z" fill="#e2e2e2"/></svg>
<svg style="left:155px;top:231.2px;" width="9" height="9" viewBox="0 0 9 9"><rect x=".7" y=".7" width="7.4" height="7.6" fill="none" stroke="#e2e2e2" stroke-width="1.15" stroke-dasharray="1 .8"/><path d="M2.7 6.6 L4.4 2 L6.1 6.6 M3.3 5 H5.5" fill="none" stroke="#e2e2e2" stroke-width=".9"/></svg>
<svg style="left:163.3px;top:239.29999999999998px;" width="3" height="3" viewBox="0 0 3 3"><path d="M2.6 0 V2.6 H0 Z" fill="#e2e2e2"/></svg>
<svg style="left:154.5px;top:251.5px;" width="10" height="9" viewBox="0 0 10 9"><path d="M2.2 5.6 L5.2 1 L8.4 4.4 L3.4 8 Z" fill="none" stroke="#e2e2e2" stroke-width="1.15" stroke-linejoin="round"/><path d="M1 8.4 Q3 5.4 4.6 6" fill="none" stroke="#e2e2e2" stroke-width=".95"/><circle cx="5.2" cy="4.4" r=".9" fill="#e2e2e2"/></svg>
<svg style="left:163.3px;top:259.90000000000003px;" width="3" height="3" viewBox="0 0 3 3"><path d="M2.6 0 V2.6 H0 Z" fill="#e2e2e2"/></svg>
<div class="a" style="left:155px;top:267.6px;width:9px;height:0.9px;background:#555;"></div>
<svg style="left:154.8px;top:276.9px;" width="10" height="9" viewBox="0 0 10 9"><rect x=".7" y=".7" width="6.4" height="5.2" fill="none" stroke="#e2e2e2" stroke-width="1.15"/><path d="M2 2.4 H5.8 M2 4 H4.8" stroke="#e2e2e2" stroke-width=".7"/><rect x=".7" y="6.8" width="2.4" height="1.8" fill="none" stroke="#e2e2e2" stroke-width=".95"/><path d="M4.6 8.6 L8.6 4.4" stroke="#e2e2e2" stroke-width="1.2"/></svg>
<svg style="left:154.8px;top:295.1px;" width="10" height="9.5" viewBox="0 0 10 9.5"><path d="M5.6 .7 H1.7 A1 1 0 0 0 .7 1.7 V7.8 A1 1 0 0 0 1.7 8.8 H3.6" fill="none" stroke="#e2e2e2" stroke-width="1.15"/><path d="M5.6 .7 Q7.6 2.4 7.2 4" fill="none" stroke="#e2e2e2" stroke-width="1.15"/><path d="M2.2 4.6 L4 6 L2.2 7" fill="none" stroke="#e2e2e2" stroke-width=".95"/><path d="M4.6 8.6 L8.6 4.8" stroke="#e2e2e2" stroke-width="1.2"/></svg>
<svg style="left:154.6px;top:313.4px;" width="10" height="9.5" viewBox="0 0 10 9.5"><path d="M.9 3 Q.9 .8 4.6 .8 Q8.2 .8 8.2 3" fill="none" stroke="#e2e2e2" stroke-width="1.15"/><path d="M.9 3 H8.2 M.9 3 V6.4 Q.9 7.6 2.2 7.6" fill="none" stroke="#e2e2e2" stroke-width="1.15"/><circle cx="5.6" cy="5.8" r="1.7" fill="none" stroke="#e2e2e2" stroke-width="1.15"/><path d="M6.8 7 L8.6 8.8" stroke="#e2e2e2" stroke-width="1.1"/></svg>
<svg style="left:155px;top:330.6px;" width="9" height="9.5" viewBox="0 0 9 9.5"><path d="M4.6 8.6 H2 A1 1 0 0 1 1 7.6 V1.8 A1 1 0 0 1 2 .8 H5 L7.2 3 V4.4" fill="none" stroke="#e2e2e2" stroke-width="1.15"/><path d="M3.4 1.6 V4.4" stroke="#e2e2e2" stroke-width=".95"/><circle cx="6.2" cy="6.8" r="1.8" fill="none" stroke="#e2e2e2" stroke-width="1.15"/></svg>
<svg style="left:154.8px;top:349.5px;" width="10" height="9.5" viewBox="0 0 10 9.5"><rect x=".8" y=".8" width="5" height="3.2" fill="none" stroke="#e2e2e2" stroke-width="1.15"/><rect x=".8" y="5.4" width="5" height="3.2" fill="none" stroke="#e2e2e2" stroke-width="1.15"/><path d="M2 2.4 H4.6 M2 7 H4.6" stroke="#e2e2e2" stroke-width=".6"/><path d="M7.6 1 V4.4 M6.6 2 L7.6 .9 L8.6 2 M7.6 5.4 V8.4" fill="none" stroke="#e2e2e2" stroke-width=".95"/></svg>
<svg style="left:154.8px;top:367.3px;" width="10" height="10" viewBox="0 0 10 10"><circle cx="4.8" cy="4.7" r="3.9" fill="none" stroke="#e2e2e2" stroke-width="1.15"/><path d="M2.9 4.8 L4.2 6 L6.7 3.4" fill="none" stroke="#e2e2e2" stroke-width="1.15"/></svg>
<div class="a" style="left:156.3px;top:391.4px;width:1.3px;height:1.3px;background:#e2e2e2;border-radius:50%"></div>
<div class="a" style="left:158.9px;top:391.4px;width:1.3px;height:1.3px;background:#e2e2e2;border-radius:50%"></div>
<div class="a" style="left:161.5px;top:391.4px;width:1.3px;height:1.3px;background:#e2e2e2;border-radius:50%"></div>
<div class="a" style="left:401.6px;top:41.2px;width:1.6px;height:366px;background:#434343;"></div>
<div class="a" style="left:403.2px;top:41.2px;width:174px;height:366px;background:#303030;"></div>
<div class="a" style="left:577.3px;top:41.2px;width:1.7px;height:366px;background:#404040;"></div>
<div class="a" style="left:579px;top:41.2px;width:21px;height:366px;background:#303030;"></div>
<svg style="left:585.2px;top:49.3px;" width="10" height="10" viewBox="0 0 10 10"><path d="M2.6 1.6 Q4.6 .4 7 1 Q9.4 2 9 5.2 Q8.6 8.6 5.2 8.8 Q2.4 8.8 1.2 6.8 Q.4 4.2 2.6 1.6 Z" fill="none" stroke="#e0e0e0" stroke-width="1.15"/><path d="M1.4 4.6 L3.4 7.4" stroke="#e0e0e0" stroke-width=".8"/><path d="M4.6 3.6 H6.6 L6 5.6 H5.2 Z" fill="#e0e0e0"/></svg>
<svg style="left:584.7px;top:68.4px;" width="11" height="10" viewBox="0 0 11 10"><path d="M1 .8 H5.6 V9 L3.3 7.2 L1 9 Z" fill="none" stroke="#e0e0e0" stroke-width="1.15" stroke-linejoin="round"/><path d="M7 2.2 H8.8 V8 H7" fill="none" stroke="#e0e0e0" stroke-width="1.05"/><path d="M9.6 3 V7.4" stroke="#e0e0e0" stroke-width=".7"/></svg>
<svg style="left:585.5px;top:88px;" width="10" height="10" viewBox="0 0 10 10"><path d="M2.4 2.6 V1.6 A1 1 0 0 1 3.4 .6 H6 L8.4 3 V7.4 A1 1 0 0 1 7.4 8.4 H6.6" fill="none" stroke="#e0e0e0" stroke-width="1.05"/><rect x=".8" y="2.8" width="5.6" height="6.4" rx="1" fill="#303030" stroke="#e0e0e0" stroke-width="1.15"/></svg>
<div class="a" style="left:581.8px;top:103.8px;width:16.2px;height:17px;background:#cdcdcd;border-radius:2px"></div>
<svg style="left:585.3px;top:107.6px;" width="10" height="10" viewBox="0 0 10 10"><circle cx="4.4" cy="4.4" r="3.7" fill="none" stroke="#222" stroke-width="1.1"/><path d="M3.8 2.4 L2.8 4.6 H5.6 L4.6 6.6" fill="none" stroke="#222" stroke-width="1.05"/><circle cx="7" cy="7" r="2" fill="#cdcdcd" stroke="#222" stroke-width="1.15"/><path d="M6 7.1 L6.8 7.8 L8 6.2" fill="none" stroke="#222" stroke-width=".7"/></svg>
<svg style="left:585.6px;top:126.6px;" width="9" height="10" viewBox="0 0 9 10"><path d="M5.4 .7 H2 A1 1 0 0 0 1 1.7 V8.2 A1 1 0 0 0 2 9.2 H7 A1 1 0 0 0 8 8.2 V3.3 Z" fill="none" stroke="#e0e0e0" stroke-width="1.15"/><path d="M3.2 4.4 H5.4 V8.2 M3.2 6.4 H5.4" fill="none" stroke="#e0e0e0" stroke-width="1.05"/></svg>
<svg style="left:585.2px;top:146.6px;" width="10" height="10" viewBox="0 0 10 10"><circle cx="2" cy="1.8" r="1.2" fill="none" stroke="#e0e0e0" stroke-width="1.05"/><circle cx="7.8" cy="1.8" r="1.2" fill="none" stroke="#e0e0e0" stroke-width="1.05"/><circle cx="2" cy="8" r="1.2" fill="none" stroke="#e0e0e0" stroke-width="1.05"/><path d="M3 1.8 H6.6 M7 2.6 L2.8 7.2 M3.2 8 H8.8 M7.6 6.8 L8.9 8 L7.6 9.2 M2 3 L4 5.4" fill="none" stroke="#e0e0e0" stroke-width="1.05"/></svg>
<svg style="left:586px;top:166px;" width="9" height="10" viewBox="0 0 9 10"><path d="M1 3.2 L4.4 .8 L7.8 3.2 V8.4 A.8 .8 0 0 1 7 9.2 H1.8 A.8 .8 0 0 1 1 8.4 Z" fill="none" stroke="#e0e0e0" stroke-width="1.15"/><path d="M4.4 4 V7.6 M3.4 5 H5.4" stroke="#e0e0e0" stroke-width=".8"/></svg>
<div class="a" style="left:581.9px;top:265.4px;width:15.4px;height:16px;background:#1c1c1c;border:1px solid #505050;border-radius:2.5px"></div>
<svg style="left:588px;top:270.1px;" width="4" height="6" viewBox="0 0 4 6"><path d="M2.3 5.6 V0.5 L0.6 1.6" fill="none" stroke="#f4f4f4" stroke-width="1.2" stroke-linejoin="round"/></svg>
<svg style="left:588px;top:288.2px;" width="4" height="6" viewBox="0 0 4 6"><path d="M2.3 5.6 V0.5 L0.6 1.6" fill="none" stroke="#f4f4f4" stroke-width="1.2" stroke-linejoin="round"/></svg>
<svg style="left:587.6px;top:307.5px;" width="6" height="4" viewBox="0 0 6 4"><path d="M.6 3.2 L3 .9 L5.4 3.2" fill="none" stroke="#9a9a9a" stroke-width="1.05"/></svg>
<svg style="left:587.6px;top:323.8px;" width="6" height="4" viewBox="0 0 6 4"><path d="M.6 .8 L3 3.1 L5.4 .8" fill="none" stroke="#9a9a9a" stroke-width="1.05"/></svg>
<div class="a" style="left:581.6px;top:333.8px;width:17.6px;height:1px;background:#4a4a4a;"></div>
<svg style="left:586.4px;top:341px;" width="9" height="9" viewBox="0 0 9 9"><path d="M7.4 4.6 A3.4 3.4 0 1 1 5.6 1.4" fill="none" stroke="#e0e0e0" stroke-width="1.1"/><path d="M5 .2 L7.8 .9 L6.4 3.2 Z" fill="#e0e0e0"/></svg>
<svg style="left:586px;top:358px;" width="11" height="10" viewBox="0 0 11 10"><path d="M5.4 .7 H1.8 A1 1 0 0 0 .8 1.7 V8 A1 1 0 0 0 1.8 9 H6.8 A1 1 0 0 0 7.8 8 V3.1 Z" fill="none" stroke="#e0e0e0" stroke-width="1.15"/><path d="M2.8 4.6 V7.4 M4.4 3.6 V7.4 M2.8 4.4 H4.4" stroke="#e0e0e0" stroke-width=".8"/><path d="M10 7.6 V10 H7.6 Z" fill="#e0e0e0"/></svg>
<svg style="left:586px;top:375.8px;" width="10" height="10" viewBox="0 0 10 10"><circle cx="4.2" cy="4.2" r="3.2" fill="none" stroke="#e0e0e0" stroke-width="1.1"/><path d="M6.5 6.5 L8.8 8.8" stroke="#e0e0e0" stroke-width="1.2"/><path d="M4.2 2.6 V5.8 M2.6 4.2 H5.8" stroke="#e0e0e0" stroke-width="1.05"/></svg>
<svg style="left:586px;top:394.2px;" width="10" height="10" viewBox="0 0 10 10"><circle cx="4.2" cy="4.2" r="3.2" fill="none" stroke="#e0e0e0" stroke-width="1.1"/><path d="M6.5 6.5 L8.8 8.8" stroke="#e0e0e0" stroke-width="1.2"/><path d="M2.6 4.2 H5.8" stroke="#e0e0e0" stroke-width="1.05"/></svg>
<svg style="left:418.6px;top:52.2px;" width="5" height="5" viewBox="0 0 5 5"><path d="M0.4 0.4 L4.3 4.3 M4.3 0.4 L0.4 4.3" stroke="#ddd" stroke-width="0.9"/></svg>
<div class="t" style="left:434.4px;top:50.68px;font-size:15.40px;line-height:15.40px;color:#f2f2f2;-webkit-text-stroke:0.60px #f2f2f2;font-weight:bold;transform:scale(0.4900,0.5000);transform-origin:0 0;">Toegankelijkheidscontrole</div>
<div class="a" style="left:557.2px;top:53.5px;width:1.6px;height:1.6px;background:#e6e6e6;border-radius:50%"></div>
<div class="a" style="left:560.1px;top:53.5px;width:1.6px;height:1.6px;background:#e6e6e6;border-radius:50%"></div>
<div class="a" style="left:563.0px;top:53.5px;width:1.6px;height:1.6px;background:#e6e6e6;border-radius:50%"></div>
<svg style="left:427.90000000000003px;top:68.3px;" width="7.4" height="7.4" viewBox="0 0 7.4 7.4"><circle cx="3.7" cy="3.7" r="4.1" fill="#1f1f1f"/><circle cx="3.7" cy="3.7" r="3.5" fill="#e4727a"/><path d="M2.3 2.3 L5.1 5.1 M5.1 2.3 L2.3 5.1" stroke="#fff" stroke-width="1"/></svg>
<div class="t" style="left:438.6px;top:68.34px;font-size:11.00px;line-height:11.00px;color:#f4f4f4;-webkit-text-stroke:0.60px #f4f4f4;font-weight:bold;transform:scale(0.4455,0.5000);transform-origin:0 0;">PDF-bestand met codes - Mislukt</div>
<svg style="left:427.90000000000003px;top:83.0px;" width="7.4" height="7.4" viewBox="0 0 7.4 7.4"><circle cx="3.7" cy="3.7" r="4.1" fill="#1f1f1f"/><circle cx="3.7" cy="3.7" r="3.5" fill="#3a8ee6"/><path d="M2.6 2.9 A1.15 1.15 0 1 1 3.7 4.1 V4.6" fill="none" stroke="#fff" stroke-width=".9"/><circle cx="3.7" cy="5.8" r=".5" fill="#fff"/></svg>
<div class="t" style="left:438.6px;top:83.04px;font-size:11.00px;line-height:11.00px;color:#f4f4f4;-webkit-text-stroke:0.60px #f4f4f4;font-weight:bold;transform:scale(0.4410,0.5000);transform-origin:0 0;">Logische leesvolgorde - Handmatige controle vereist</div>
<div class="t" style="left:440.8px;top:98.34px;font-size:11.00px;line-height:11.00px;color:#ececec;-webkit-text-stroke:0.60px #ececec;transform:scale(0.4530,0.5000);transform-origin:0 0;">Primaire taal - Goedgekeurd</div>
<svg style="left:427.90000000000003px;top:114.2px;" width="7.4" height="7.4" viewBox="0 0 7.4 7.4"><circle cx="3.7" cy="3.7" r="4.1" fill="#1f1f1f"/><circle cx="3.7" cy="3.7" r="3.5" fill="#e4727a"/><path d="M2.3 2.3 L5.1 5.1 M5.1 2.3 L2.3 5.1" stroke="#fff" stroke-width="1"/></svg>
<div class="t" style="left:438.6px;top:114.24px;font-size:11.00px;line-height:11.00px;color:#f4f4f4;-webkit-text-stroke:0.60px #f4f4f4;font-weight:bold;transform:scale(0.4510,0.5000);transform-origin:0 0;">Titel - Mislukt</div>
<div class="t" style="left:440.8px;top:129.74px;font-size:11.00px;line-height:11.00px;color:#ececec;-webkit-text-stroke:0.60px #ececec;transform:scale(0.4520,0.5000);transform-origin:0 0;">Bladwijzers - Goedgekeurd</div>
<svg style="left:427.90000000000003px;top:145.20000000000002px;" width="7.4" height="7.4" viewBox="0 0 7.4 7.4"><circle cx="3.7" cy="3.7" r="4.1" fill="#1f1f1f"/><circle cx="3.7" cy="3.7" r="3.5" fill="#3a8ee6"/><path d="M2.6 2.9 A1.15 1.15 0 1 1 3.7 4.1 V4.6" fill="none" stroke="#fff" stroke-width=".9"/><circle cx="3.7" cy="5.8" r=".5" fill="#fff"/></svg>
<div class="t" style="left:438.6px;top:145.24px;font-size:11.00px;line-height:11.00px;color:#f4f4f4;-webkit-text-stroke:0.60px #f4f4f4;font-weight:bold;transform:scale(0.4455,0.5000);transform-origin:0 0;">Kleurcontrast - Handmatige controle vereist</div>
<svg style="left:410.3px;top:161.9px;" width="6" height="4" viewBox="0 0 6 4"><path d="M0.5 0.7 L3 3.1 L5.5 0.7" fill="none" stroke="#e8e8e8" stroke-width="1.25"/></svg>
<div class="t" style="left:432.2px;top:160.64px;font-size:11.00px;line-height:11.00px;color:#f4f4f4;-webkit-text-stroke:0.60px #f4f4f4;font-weight:bold;transform:scale(0.4415,0.5000);transform-origin:0 0;">Pagina-inhoud (3 issues)</div>
<svg style="left:427.90000000000003px;top:176.60000000000002px;" width="7.4" height="7.4" viewBox="0 0 7.4 7.4"><circle cx="3.7" cy="3.7" r="4.1" fill="#1f1f1f"/><circle cx="3.7" cy="3.7" r="3.5" fill="#e4727a"/><path d="M2.3 2.3 L5.1 5.1 M5.1 2.3 L2.3 5.1" stroke="#fff" stroke-width="1"/></svg>
<svg style="left:419.4px;top:177.3px;" width="4" height="6" viewBox="0 0 4 6"><path d="M0.7 0.5 L3.1 3 L0.7 5.5" fill="none" stroke="#e8e8e8" stroke-width="1.25"/></svg>
<div class="t" style="left:438.6px;top:176.64px;font-size:11.00px;line-height:11.00px;color:#f4f4f4;-webkit-text-stroke:0.60px #f4f4f4;font-weight:bold;transform:scale(0.4430,0.5000);transform-origin:0 0;">Gecodeerde inhoud - Mislukt</div>
<svg style="left:427.90000000000003px;top:191.9px;" width="7.4" height="7.4" viewBox="0 0 7.4 7.4"><circle cx="3.7" cy="3.7" r="4.1" fill="#1f1f1f"/><circle cx="3.7" cy="3.7" r="3.5" fill="#e4727a"/><path d="M2.3 2.3 L5.1 5.1 M5.1 2.3 L2.3 5.1" stroke="#fff" stroke-width="1"/></svg>
<svg style="left:419.4px;top:192.6px;" width="4" height="6" viewBox="0 0 4 6"><path d="M0.7 0.5 L3.1 3 L0.7 5.5" fill="none" stroke="#e8e8e8" stroke-width="1.25"/></svg>
<div class="t" style="left:438.6px;top:191.94px;font-size:11.00px;line-height:11.00px;color:#f4f4f4;-webkit-text-stroke:0.60px #f4f4f4;font-weight:bold;transform:scale(0.4445,0.5000);transform-origin:0 0;">Gecodeerde annotaties - Mislukt</div>
<svg style="left:427.90000000000003px;top:207.00000000000003px;" width="7.4" height="7.4" viewBox="0 0 7.4 7.4"><circle cx="3.7" cy="3.7" r="4.1" fill="#1f1f1f"/><circle cx="3.7" cy="3.7" r="3.5" fill="#e4727a"/><path d="M2.3 2.3 L5.1 5.1 M5.1 2.3 L2.3 5.1" stroke="#fff" stroke-width="1"/></svg>
<svg style="left:419.4px;top:207.70000000000002px;" width="4" height="6" viewBox="0 0 4 6"><path d="M0.7 0.5 L3.1 3 L0.7 5.5" fill="none" stroke="#e8e8e8" stroke-width="1.25"/></svg>
<div class="t" style="left:438.6px;top:207.04px;font-size:11.00px;line-height:11.00px;color:#f4f4f4;-webkit-text-stroke:0.60px #f4f4f4;font-weight:bold;transform:scale(0.4455,0.5000);transform-origin:0 0;">Tabvolgorde - Mislukt</div>
<div class="t" style="left:440.8px;top:221.94px;font-size:11.00px;line-height:11.00px;color:#ececec;-webkit-text-stroke:0.60px #ececec;transform:scale(0.4505,0.5000);transform-origin:0 0;">Tekencodering - Goedgekeurd</div>
<div class="t" style="left:440.8px;top:238.04px;font-size:11.00px;line-height:11.00px;color:#ececec;-webkit-text-stroke:0.60px #ececec;transform:scale(0.4570,0.5000);transform-origin:0 0;">Gecodeerde multimedia - Goedgekeurd</div>
<div class="t" style="left:440.8px;top:254.04px;font-size:11.00px;line-height:11.00px;color:#ececec;-webkit-text-stroke:0.60px #ececec;transform:scale(0.4540,0.5000);transform-origin:0 0;">Schermflikkering - Goedgekeurd</div>
<div class="t" style="left:440.8px;top:270.44px;font-size:11.00px;line-height:11.00px;color:#ececec;-webkit-text-stroke:0.60px #ececec;transform:scale(0.4425,0.5000);transform-origin:0 0;">Scripts - Goedgekeurd</div>
<div class="t" style="left:440.8px;top:286.44px;font-size:11.00px;line-height:11.00px;color:#ececec;-webkit-text-stroke:0.60px #ececec;transform:scale(0.4550,0.5000);transform-origin:0 0;">Reacties met tijdslimiet - Goedgekeurd</div>
<div class="t" style="left:440.8px;top:302.44px;font-size:11.00px;line-height:11.00px;color:#ececec;-webkit-text-stroke:0.60px #ececec;transform:scale(0.4540,0.5000);transform-origin:0 0;">Navigatiekoppelingen - Goedgekeurd</div>
<svg style="left:411.3px;top:319.0px;" width="4" height="6" viewBox="0 0 4 6"><path d="M0.7 0.5 L3.1 3 L0.7 5.5" fill="none" stroke="#e8e8e8" stroke-width="1.25"/></svg>
<div class="t" style="left:432.2px;top:318.74px;font-size:11.00px;line-height:11.00px;color:#ececec;-webkit-text-stroke:0.60px #ececec;transform:scale(0.4670,0.5000);transform-origin:0 0;">Formulieren</div>
<svg style="left:411.3px;top:335.5px;" width="4" height="6" viewBox="0 0 4 6"><path d="M0.7 0.5 L3.1 3 L0.7 5.5" fill="none" stroke="#e8e8e8" stroke-width="1.25"/></svg>
<div class="t" style="left:432.2px;top:335.24px;font-size:11.00px;line-height:11.00px;color:#f4f4f4;-webkit-text-stroke:0.60px #f4f4f4;font-weight:bold;transform:scale(0.4420,0.5000);transform-origin:0 0;">Alternatieve tekst (5 issues)</div>
<svg style="left:411.3px;top:351.5px;" width="4" height="6" viewBox="0 0 4 6"><path d="M0.7 0.5 L3.1 3 L0.7 5.5" fill="none" stroke="#e8e8e8" stroke-width="1.25"/></svg>
<div class="t" style="left:432.2px;top:351.24px;font-size:11.00px;line-height:11.00px;color:#f4f4f4;-webkit-text-stroke:0.60px #f4f4f4;font-weight:bold;transform:scale(0.4425,0.5000);transform-origin:0 0;">Tabellen (4 issues)</div>
<svg style="left:411.3px;top:367.3px;" width="4" height="6" viewBox="0 0 4 6"><path d="M0.7 0.5 L3.1 3 L0.7 5.5" fill="none" stroke="#e8e8e8" stroke-width="1.25"/></svg>
<div class="t" style="left:432.2px;top:367.04px;font-size:11.00px;line-height:11.00px;color:#f4f4f4;-webkit-text-stroke:0.60px #f4f4f4;font-weight:bold;transform:scale(0.4325,0.5000);transform-origin:0 0;">Lijsten (2 issues)</div>
<svg style="left:410.3px;top:384.3px;" width="6" height="4" viewBox="0 0 6 4"><path d="M0.5 0.7 L3 3.1 L5.5 0.7" fill="none" stroke="#e8e8e8" stroke-width="1.25"/></svg>
<div class="t" style="left:432.2px;top:383.04px;font-size:11.00px;line-height:11.00px;color:#f4f4f4;-webkit-text-stroke:0.60px #f4f4f4;font-weight:bold;transform:scale(0.4275,0.5000);transform-origin:0 0;">Koppen (1 issue)</div>
<svg style="left:427.90000000000003px;top:398.7px;" width="7.4" height="7.4" viewBox="0 0 7.4 7.4"><circle cx="3.7" cy="3.7" r="4.1" fill="#1f1f1f"/><circle cx="3.7" cy="3.7" r="3.5" fill="#e4727a"/><path d="M2.3 2.3 L5.1 5.1 M5.1 2.3 L2.3 5.1" stroke="#fff" stroke-width="1"/></svg>
<div class="t" style="left:438.6px;top:398.74px;font-size:11.00px;line-height:11.00px;color:#f4f4f4;-webkit-text-stroke:0.60px #f4f4f4;font-weight:bold;transform:scale(0.4340,0.5000);transform-origin:0 0;">Juiste insluiting via nesting - Mislukt</div>
<div class="a" style="left:404.6px;top:212.9px;width:2.5px;height:22.1px;background:#5a5a5a;border-radius:2px"></div>
</body></html>
